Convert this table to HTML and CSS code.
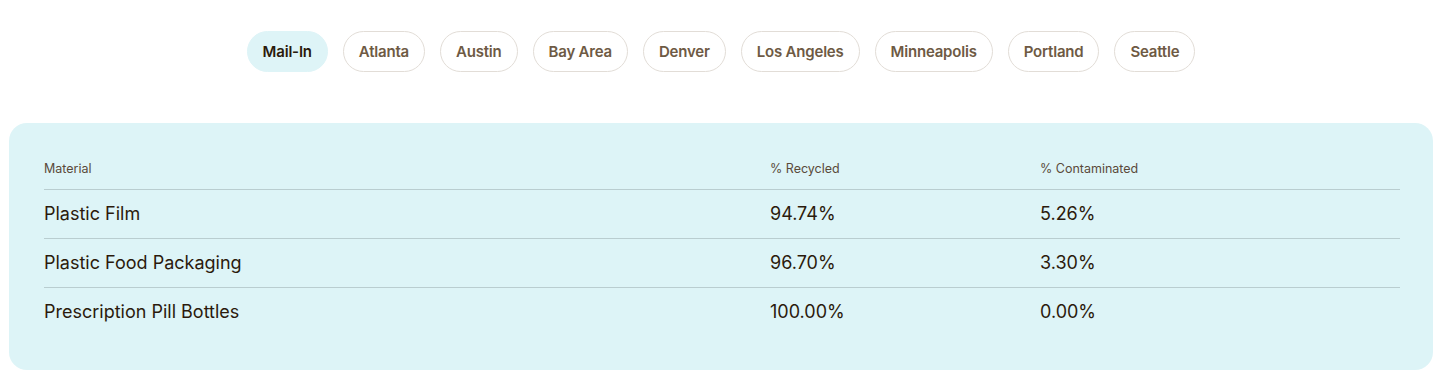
FILE: index.html
```html
<!DOCTYPE html>
<html>
<head>
<meta charset="utf-8">
<link rel="stylesheet" href="styles.css">
</head>
<body>
<div class="page">
  <nav class="tabs">
    <button class="pill active">Mail-In</button>
    <button class="pill">Atlanta</button>
    <button class="pill">Austin</button>
    <button class="pill">Bay Area</button>
    <button class="pill">Denver</button>
    <button class="pill">Los Angeles</button>
    <button class="pill">Minneapolis</button>
    <button class="pill">Portland</button>
    <button class="pill">Seattle</button>
  </nav>
  <section class="card">
    <table class="data">
      <colgroup><col class="c1"><col class="c2"><col class="c3"></colgroup>
      <thead>
        <tr><th>Material</th><th>% Recycled</th><th>% Contaminated</th></tr>
      </thead>
      <tbody>
        <tr><td>Plastic Film</td><td>94.74%</td><td>5.26%</td></tr>
        <tr><td>Plastic Food Packaging</td><td>96.70%</td><td>3.30%</td></tr>
        <tr><td>Prescription Pill Bottles</td><td>100.00%</td><td>0.00%</td></tr>
      </tbody>
    </table>
  </section>
</div>
</body>
</html>
```
FILE: styles.css
```css
* { box-sizing: border-box; }
html, body { margin: 0; padding: 0; background: #fff; }
body { font-family: "Inter", "Liberation Sans", sans-serif; color: #2b1a0c; }
.page { padding: 31px 23px 0 9px; }
.tabs { display: flex; justify-content: center; gap: 15px; }
.pill {
  height: 41px;
  padding: 0 15px;
  border: 1px solid #e2ddd7;
  border-radius: 21px;
  background: #fff;
  font-family: "Inter", "Liberation Sans", sans-serif;
  font-size: 15px;
  font-weight: 600;
  letter-spacing: -0.2px;
  color: #6e5a44;
}
.pill.active { background: #def4f7; border-color: #def4f7; color: #2b1a0c; }
.card {
  margin-top: 51px;
  background: #ddf4f7;
  border-radius: 18px;
  padding: 33px 33px 33px 35px;
  height: 247px;
}
.data { width: 1356px; border-collapse: collapse; }
.c1 { width: 726px; }
.c2 { width: 270px; }
.data th {
  text-align: left;
  font-weight: 400;
  font-size: 12.5px;
  color: #5a4a3a;
  height: 33px;
  padding: 0 0 8px;
  vertical-align: middle;
  border-bottom: 1px solid #b9cdd0;
}
.data td {
  font-size: 18px;
  height: 49px;
  padding: 0 0 1px;
  vertical-align: middle;
  color: #2b1a0c;
}
.data tbody tr:not(:last-child) td { border-bottom: 1px solid #b9cdd0; }
```
